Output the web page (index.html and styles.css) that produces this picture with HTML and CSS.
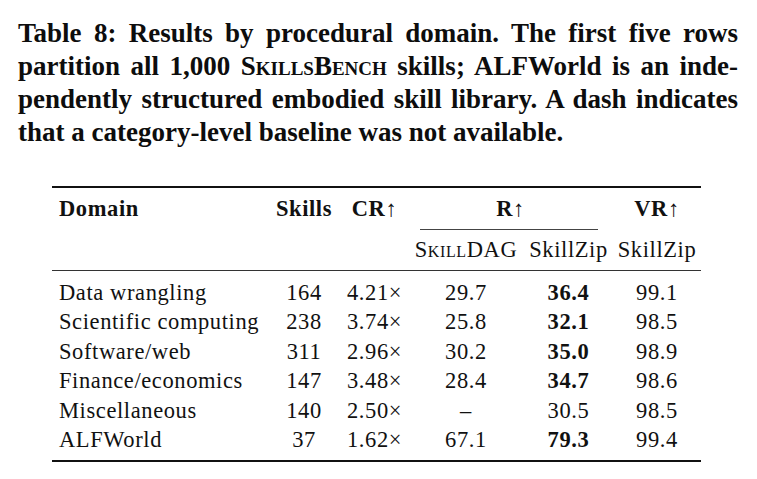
FILE: index.html
```html
<!DOCTYPE html>
<html>
<head>
<meta charset="utf-8">
<link rel="stylesheet" href="styles.css">
</head>
<body>
<p class="caption">
<span class="ln">Table 8: Results by procedural domain. The first five rows</span>
<span class="ln">partition all 1,000 <span class="sc">SkillsBench</span> skills; ALFWorld is an inde-</span>
<span class="ln">pendently structured embodied skill library. A dash indicates</span>
<span class="ln last">that a category-level baseline was not available.</span>
</p>
<table class="results">
<colgroup>
<col class="c-domain"><col class="c-skills"><col class="c-cr"><col class="c-dag"><col class="c-zip"><col class="c-vr">
</colgroup>
<thead>
<tr class="h1">
<th class="left">Domain</th>
<th>Skills</th>
<th>CR<span class="arr">↑</span></th>
<th colspan="2">R<span class="arr">↑</span><div class="cmid"></div></th>
<th>VR<span class="arr">↑</span></th>
</tr>
<tr class="h2">
<th></th><th></th><th></th>
<th><span class="sc">Skill</span>DAG</th>
<th>SkillZip</th>
<th>SkillZip</th>
</tr>
</thead>
<tbody>
<tr class="first"><td class="left">Data wrangling</td><td>164</td><td>4.21×</td><td>29.7</td><td class="b">36.4</td><td>99.1</td></tr>
<tr><td class="left">Scientific computing</td><td>238</td><td>3.74×</td><td>25.8</td><td class="b">32.1</td><td>98.5</td></tr>
<tr><td class="left">Software/web</td><td>311</td><td>2.96×</td><td>30.2</td><td class="b">35.0</td><td>98.9</td></tr>
<tr><td class="left">Finance/economics</td><td>147</td><td>3.48×</td><td>28.4</td><td class="b">34.7</td><td>98.6</td></tr>
<tr><td class="left">Miscellaneous</td><td>140</td><td>2.50×</td><td>–</td><td>30.5</td><td>98.5</td></tr>
<tr class="last"><td class="left">ALFWorld</td><td>37</td><td>1.62×</td><td>67.1</td><td class="b">79.3</td><td>99.4</td></tr>
</tbody>
</table>
</body>
</html>
```
FILE: styles.css
```css
html, body {
  margin: 0;
  padding: 0;
  background: #ffffff;
}
body {
  font-family: "Liberation Serif", "DejaVu Serif", serif;
  color: #111111;
}
.caption {
  margin: 17px 19px 0 18px;
  font-weight: bold;
  font-size: 27px;
  line-height: 33px;
  color: #0d0d0d;
}
.caption .ln {
  display: block;
  text-align: justify;
  text-align-last: justify;
}
.caption .ln.last {
  text-align-last: left;
}
.sc {
  font-variant: small-caps;
}
.results {
  margin: 37px 0 0 52px;
  width: 649px;
  table-layout: fixed;
  border-collapse: collapse;
  font-size: 22.5px;
  letter-spacing: 0.6px;
  line-height: 29.5px;
}
.c-domain { width: 215px; }
.c-skills { width: 74px; }
.c-cr { width: 67px; }
.c-dag { width: 116px; }
.c-zip { width: 89px; }
.c-vr { width: 88px; }
.results th, .results td {
  padding: 0;
  text-align: center;
  vertical-align: top;
  white-space: nowrap;
}
.results .left {
  text-align: left;
  padding-left: 7px;
}
.results .h1 th {
  font-weight: bold;
  border-top: 2px solid #111;
  padding-top: 6px;
}
.arr {
  font-weight: normal;
}
.cmid {
  margin: 5px 15px 0 12px;
  border-top: 1px solid #444;
}
.results .h2 th {
  font-weight: normal;
  padding-top: 5px;
  padding-bottom: 6px;
  border-bottom: 1px solid #333;
}
.results .first td {
  padding-top: 6.5px;
}
.results .last td {
  padding-bottom: 5.5px;
  border-bottom: 2px solid #111;
}
.results .b {
  font-weight: bold;
}
```
